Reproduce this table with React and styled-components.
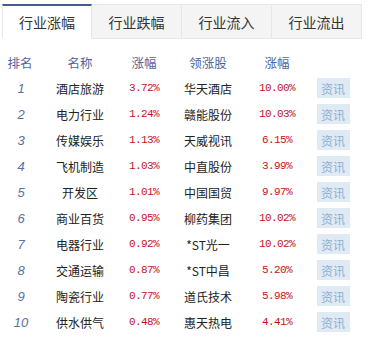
import React from "react";
import styled, { createGlobalStyle } from "styled-components";

const Global = createGlobalStyle`
  html, body { margin: 0; padding: 0; background: #fff; }
  body { font-family: "Noto Sans CJK SC", "Liberation Sans", sans-serif; }
`;

const Page = styled.div`
  width: 369px;
  height: 338px;
  overflow: hidden;
  padding-top: 4px;
  box-sizing: border-box;
`;

const Tabs = styled.div`
  display: flex;
  margin-left: 2px;
  width: 359px;
`;

const Tab = styled.div`
  flex: 0 0 90px;
  box-sizing: border-box;
  height: 35px;
  display: flex;
  align-items: center;
  justify-content: center;
  font-size: 14px;
  color: #333;
  background: ${(p) => (p.$active ? "#fff" : "#f4f4f4")};
  border-top: ${(p) => (p.$active ? "2px solid #4b5a8c" : "1px solid #e6e6e6")};
  border-left: ${(p) => (p.$first ? "1px solid #e6e6e6" : "none")};
  border-right: 1px solid #e6e6e6;
  border-bottom: ${(p) => (p.$active ? "1px solid #fff" : "1px solid #e6e6e6")};
  padding-top: ${(p) => (p.$active ? "0" : "1px")};
`;

const Table = styled.div`
  margin-top: 10px;
  display: grid;
  grid-template-columns: 40px 80px 48px 80px 58px 54px;
  grid-auto-rows: 26px;
`;

const Cell = styled.div`
  display: flex;
  align-items: center;
  justify-content: center;
  white-space: nowrap;
`;

const Head = styled(Cell)`
  font-size: 12.5px;
  color: #50659c;
`;

const Rank = styled(Cell)`
  font-family: "Liberation Sans", sans-serif;
  font-style: italic;
  font-size: 13px;
  color: #5b6fa3;
  padding-left: 2px;
`;

const Name = styled(Cell)`
  font-size: 12px;
  color: #222;
`;

const Pct = styled(Cell)`
  font-family: "Liberation Mono", monospace;
  font-size: 11px;
  letter-spacing: -0.6px;
  color: #c4121c;
`;

const Btn = styled.span`
  display: inline-flex;
  align-items: center;
  justify-content: center;
  width: 33px;
  height: 20px;
  background: #dfeaf5;
  color: #8dafd2;
  font-size: 12px;
`;

const tabs = ["行业涨幅", "行业跌幅", "行业流入", "行业流出"];

const rows = [
  ["酒店旅游", "3.72%", "华天酒店", "10.00%"],
  ["电力行业", "1.24%", "赣能股份", "10.03%"],
  ["传媒娱乐", "1.13%", "天威视讯", "6.15%"],
  ["飞机制造", "1.03%", "中直股份", "3.99%"],
  ["开发区", "1.01%", "中国国贸", "9.97%"],
  ["商业百货", "0.95%", "柳药集团", "10.02%"],
  ["电器行业", "0.92%", "*ST光一", "10.02%"],
  ["交通运输", "0.87%", "*ST中昌", "5.20%"],
  ["陶瓷行业", "0.77%", "道氏技术", "5.98%"],
  ["供水供气", "0.48%", "惠天热电", "4.41%"],
];

export default function App() {
  return (
    <Page>
      <Global />
      <Tabs>
        {tabs.map((t, i) => (
          <Tab key={t} $active={i === 0} $first={i === 0}>
            {t}
          </Tab>
        ))}
      </Tabs>
      <Table>
        <Head>排名</Head>
        <Head>名称</Head>
        <Head>涨幅</Head>
        <Head>领涨股</Head>
        <Head>涨幅</Head>
        <Head />
        {rows.map((r, i) => (
          <React.Fragment key={i}>
            <Rank>{i + 1}</Rank>
            <Name>{r[0]}</Name>
            <Pct>{r[1]}</Pct>
            <Name>{r[2]}</Name>
            <Pct>{r[3]}</Pct>
            <Cell>
              <Btn>资讯</Btn>
            </Cell>
          </React.Fragment>
        ))}
      </Table>
    </Page>
  );
}
